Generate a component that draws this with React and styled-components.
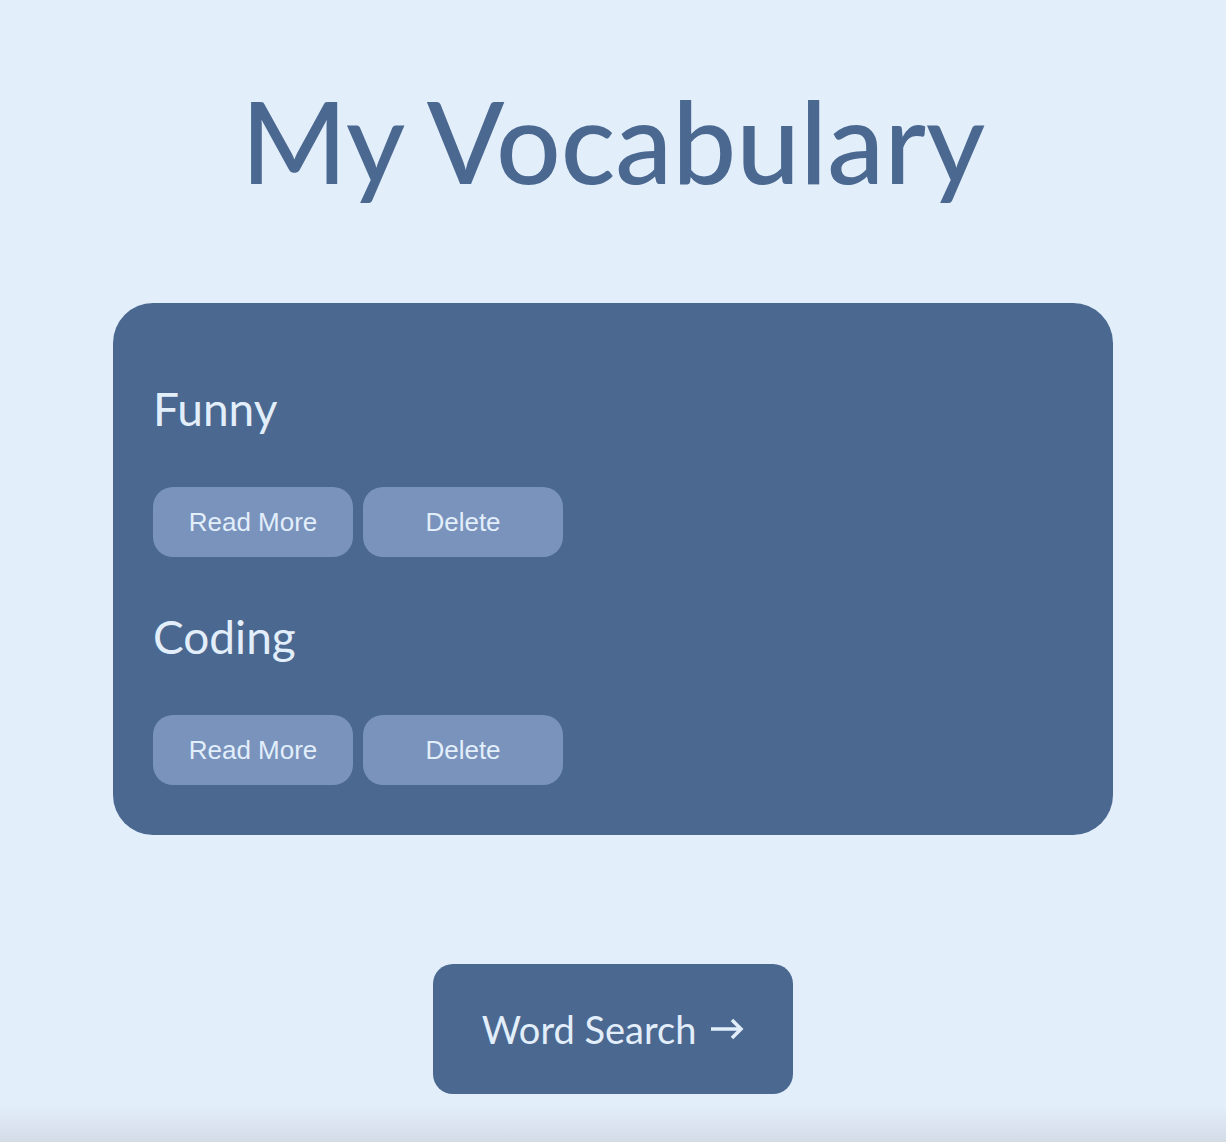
import React from 'react';
import styled, { createGlobalStyle } from 'styled-components';

const GlobalStyle = createGlobalStyle`
  html, body {
    margin: 0;
    padding: 0;
    background: #e3eefb;
  }
  body {
    font-family: Lato, "Noto Sans", sans-serif;
    min-height: 1142px;
  }
`;

const Page = styled.div`
  display: flex;
  flex-direction: column;
  align-items: center;
  padding-top: 70px;
  min-height: 1142px;
  box-sizing: border-box;
  background: linear-gradient(to bottom, #e3eefb 0, #e3eefb 1105px, #d3dbe6 1142px);
`;

const Title = styled.h1`
  margin: 0;
  font-size: 114px;
  font-weight: 500;
  line-height: 140px;
  color: #4a6890;
`;

const Panel = styled.section`
  margin-top: 93px;
  width: 1000px;
  box-sizing: border-box;
  padding: 78px 40px 50px;
  background: #4a6890;
  border-radius: 40px;
  display: flex;
  flex-direction: column;
`;

const Entry = styled.div`
  display: flex;
  flex-direction: column;
  & + & {
    margin-top: 52px;
  }
`;

const Word = styled.h2`
  margin: 0;
  font-size: 46px;
  font-weight: 400;
  line-height: 56px;
  color: #e3eefb;
`;

const Actions = styled.div`
  display: flex;
  gap: 10px;
  margin-top: 50px;
`;

const SmallButton = styled.button`
  width: 200px;
  height: 70px;
  border: none;
  border-radius: 20px;
  background: #7993bc;
  color: #e3eefb;
  font-family: "Liberation Sans", Arial, sans-serif;
  font-size: 26px;
  cursor: pointer;
`;

const SearchButton = styled.button`
  margin-top: 129px;
  width: 360px;
  height: 130px;
  border: none;
  border-radius: 20px;
  background: #4a6890;
  color: #e3eefb;
  font-family: Lato, "Noto Sans", sans-serif;
  font-size: 38px;
  display: flex;
  align-items: center;
  justify-content: center;
  gap: 14px;
  cursor: pointer;
`;

const Arrow = () => (
  <svg width="34" height="22" viewBox="0 0 34 22" fill="none" stroke="#e3eefb" strokeWidth="3.5">
    <path d="M1 11h30M22 2l9 9-9 9" />
  </svg>
);

const words = ['Funny', 'Coding'];

export default function App() {
  return (
    <>
      <GlobalStyle />
      <Page>
        <Title>My Vocabulary</Title>
        <Panel>
          {words.map((w) => (
            <Entry key={w}>
              <Word>{w}</Word>
              <Actions>
                <SmallButton>Read More</SmallButton>
                <SmallButton>Delete</SmallButton>
              </Actions>
            </Entry>
          ))}
        </Panel>
        <SearchButton>
          Word Search <Arrow />
        </SearchButton>
      </Page>
    </>
  );
}
